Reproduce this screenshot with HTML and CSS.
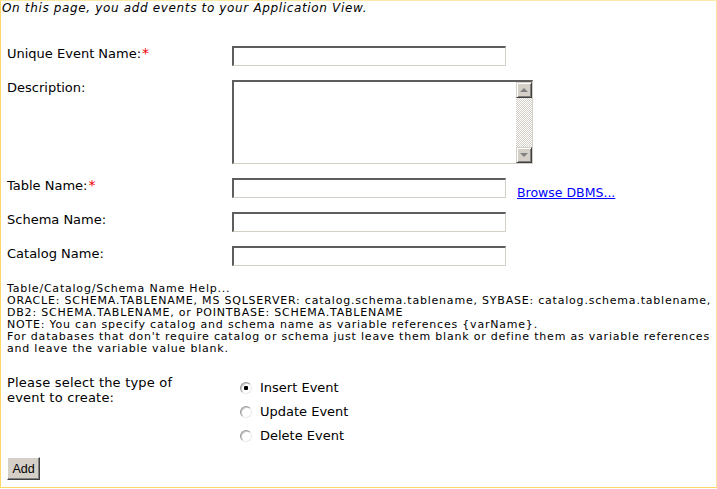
FILE: index.html
```html
<!DOCTYPE html>
<html>
<head>
<meta charset="utf-8">
<link rel="stylesheet" href="styles.css">
</head>
<body>
<div class="page">
  <p class="intro">On this page, you add events to your Application View.</p>
  <div class="main">
    <div class="form">
      <label class="lbl">Unique Event Name:<span class="req">*</span></label>
      <div class="ctl"><input class="txt" type="text"></div>

      <label class="lbl">Description:</label>
      <div class="ctl">
        <div class="area">
          <textarea class="ta"></textarea>
          <div class="sb">
            <div class="sb-btn"><span class="arr up"></span></div>
            <div class="sb-track"></div>
            <div class="sb-btn"><span class="arr down"></span></div>
          </div>
        </div>
      </div>

      <label class="lbl">Table Name:<span class="req">*</span></label>
      <div class="ctl line"><input class="txt" type="text"><a class="browse" href="#">Browse DBMS...</a></div>

      <label class="lbl">Schema Name:</label>
      <div class="ctl"><input class="txt" type="text"></div>

      <label class="lbl">Catalog Name:</label>
      <div class="ctl"><input class="txt" type="text"></div>
    </div>

    <div class="help">Table/Catalog/Schema Name Help...<br>ORACLE: SCHEMA.TABLENAME, MS SQLSERVER: catalog.schema.tablename, SYBASE: catalog.schema.tablename, DB2: SCHEMA.TABLENAME, or POINTBASE: SCHEMA.TABLENAME<br>NOTE: You can specify catalog and schema name as variable references {varName}.<br>For databases that don't require catalog or schema just leave them blank or define them as variable references and leave the variable value blank.</div>

    <div class="type-row">
      <div class="lbl">Please select the type of<br>event to create:</div>
      <div class="radios">
        <label class="opt"><input class="rad" type="radio" name="t" checked>Insert Event</label>
        <label class="opt"><input class="rad" type="radio" name="t">Update Event</label>
        <label class="opt"><input class="rad" type="radio" name="t">Delete Event</label>
      </div>
    </div>

    <button class="add" type="button">Add</button>
  </div>
</div>
</body>
</html>
```

FILE: styles.css
```css
html, body {
  margin: 0;
  padding: 0;
  background: #ffffff;
}

.page {
  box-sizing: border-box;
  width: 717px;
  height: 488px;
  border-style: solid;
  border-width: 1px;
  border-color: #ffe9a8 #ffe3a0 #ffd766 #ffd766;
  padding-left: 1px;
  font-family: "DejaVu Sans", Verdana, sans-serif;
  color: #000;
}

.intro {
  margin: 0;
  font-size: 12px;
  letter-spacing: 0.65px;
  font-style: italic;
  line-height: 14px;
}

.main {
  margin-left: 5px;
  padding-top: 31px;
}

.form {
  display: grid;
  grid-template-columns: 225px 1fr;
  row-gap: 14px;
}

.lbl {
  font-size: 13px;
  line-height: 15px;
}

.req {
  color: #ee0000;
  font-size: 14px;
  margin-left: 1px;
}

.ctl {
  display: flex;
  align-items: flex-start;
}

.ctl.line {
  align-items: flex-end;
}

.txt {
  box-sizing: border-box;
  width: 274px;
  height: 20px;
  margin: 0;
  padding: 1px 2px;
  border-style: solid;
  border-width: 2px 1px 1px 2px;
  border-color: #5e5e5e #d4d0c8 #d4d0c8 #5e5e5e;
  background: #fff;
  font-family: inherit;
  font-size: 12px;
  outline: none;
}

.area {
  box-sizing: border-box;
  width: 301px;
  height: 84px;
  display: flex;
  border-style: solid;
  border-width: 2px 1px 1px 2px;
  border-color: #5e5e5e #d4d0c8 #d4d0c8 #5e5e5e;
  background: #fff;
}

.ta {
  flex: 1;
  margin: 0;
  border: none;
  padding: 2px;
  resize: none;
  outline: none;
  overflow: hidden;
  font-family: inherit;
  font-size: 12px;
}

.sb {
  width: 16px;
  display: flex;
  flex-direction: column;
}

.sb-btn {
  box-sizing: border-box;
  height: 16px;
  background: #d4d0c8;
  border-style: solid;
  border-width: 1px;
  border-color: #d4d0c8 #404040 #404040 #d4d0c8;
  box-shadow: inset 1px 1px #ffffff, inset -1px -1px #808080;
  display: flex;
  align-items: center;
  justify-content: center;
}

.sb-track {
  flex: 1;
  background: repeating-conic-gradient(#d4d0c8 0 25%, #ffffff 0 50%) 0 0 / 2px 2px;
}

.arr {
  width: 0;
  height: 0;
  border-left: 4px solid transparent;
  border-right: 4px solid transparent;
}

.arr.up {
  border-bottom: 4px solid #808080;
}

.arr.down {
  border-top: 4px solid #808080;
}

.browse {
  margin-left: 11px;
  margin-bottom: -2px;
  color: #0000ff;
  text-decoration: underline;
  font-size: 12.5px;
  line-height: 15px;
}

.help {
  margin-top: 17px;
  font-size: 11px;
  letter-spacing: 0.79px;
  line-height: 12px;
}

.type-row {
  display: grid;
  grid-template-columns: 225px 1fr;
  margin-top: 20px;
}

.type-row > .lbl {
  letter-spacing: 0.2px;
}

.radios {
  display: flex;
  flex-direction: column;
  row-gap: 9px;
  padding-top: 5px;
  padding-left: 8px;
}

.opt {
  display: flex;
  align-items: center;
  font-size: 13px;
  line-height: 15px;
}

.rad {
  appearance: none;
  -webkit-appearance: none;
  box-sizing: border-box;
  width: 12px;
  height: 12px;
  margin: 0 8px 0 0;
  border-radius: 50%;
  border: 1px solid;
  border-color: #9a9a9a #e8e8e8 #e8e8e8 #9a9a9a;
  box-shadow: inset 1px 1px #c8c8c8;
  background: #ffffff;
}

.rad:checked {
  background: radial-gradient(circle, #000 0 2px, #ffffff 2.5px);
}

.add {
  box-sizing: border-box;
  display: block;
  margin-top: 14px;
  width: 33px;
  height: 23px;
  padding: 0;
  background: #d4d0c8;
  border-style: solid;
  border-width: 1px;
  border-color: #ffffff #404040 #404040 #ffffff;
  box-shadow: inset -1px -1px #808080;
  font-family: "Liberation Sans", Arial, sans-serif;
  font-size: 12.5px;
  color: #000;
}
```
